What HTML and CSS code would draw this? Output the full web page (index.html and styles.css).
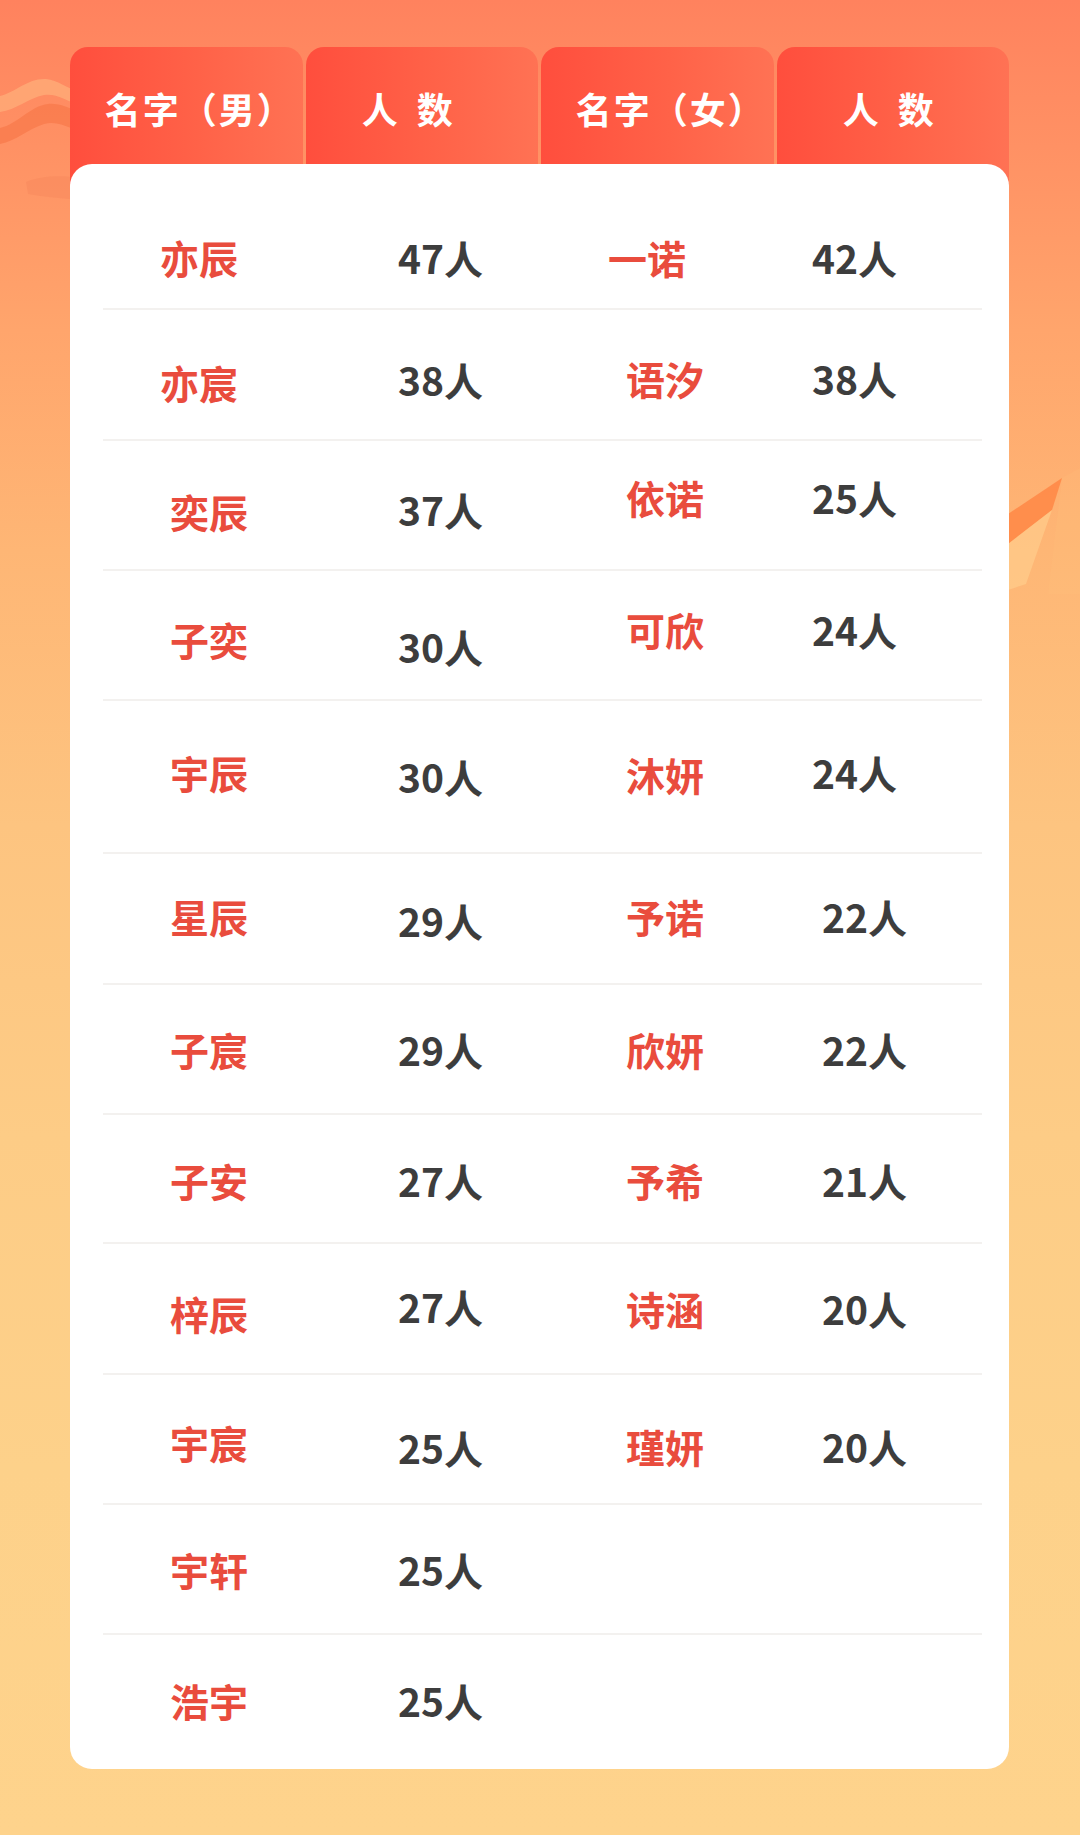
FILE: index.html
```html
<!DOCTYPE html>
<html lang="zh-CN">
<head>
<meta charset="utf-8">
<title>名字排行</title>
<link rel="stylesheet" href="styles.css">
</head>
<body>
<div class="page">
  <svg class="deco deco-left" width="80" height="220" viewBox="0 0 80 220" aria-hidden="true">
    <path d="M0,96 C16,92 28,78 46,79 C58,80 66,88 80,92 L80,106 C66,100 56,93 44,95 C28,98 16,110 0,112 Z" fill="#ffab78" opacity="0.8"/>
    <path d="M0,128 C18,124 30,106 48,104 C60,103 68,108 80,112 L80,132 C66,126 56,121 44,124 C28,129 16,141 0,144 Z" fill="#f87a4b" opacity="0.75"/>
    <path d="M26,182 C40,176 60,175 80,178 L80,200 C62,198 44,197 28,194 Z" fill="#f6845a" opacity="0.4"/>
  </svg>
  <svg class="deco deco-right" width="80" height="200" viewBox="0 0 80 200" aria-hidden="true">
    <path d="M0,120 L54,84 L44,116 L0,150 Z" fill="#ff8a48" opacity="0.9"/>
    <path d="M0,150 L44,116 L18,190 L0,196 Z" fill="#ffd08f" opacity="0.6"/>
    <path d="M54,84 L80,70 L80,200 L40,200 Z" fill="#ffc27e" opacity="0.2"/>
  </svg>

  <div class="board">
    <div class="tabs">
      <div class="tab tab-name">名字（男）</div>
      <div class="tab tab-count tab-c2">人 数</div>
      <div class="tab tab-name">名字（女）</div>
      <div class="tab tab-count tab-c4">人 数</div>
    </div>

    <div class="card">
      <div class="row r1">
        <span class="name nl">亦辰</span><span class="num">47人</span><span class="name nl2">一诺</span><span class="num">42人</span>
      </div>
      <div class="row r-131">
        <span class="name nl v8">亦宸</span><span class="num v5">38人</span><span class="name v4">语汐</span><span class="num v4">38人</span>
      </div>
      <div class="row r-130">
        <span class="name v6">奕辰</span><span class="num v4">37人</span><span class="name vm8">依诺</span><span class="num vm8">25人</span>
      </div>
      <div class="row r-130">
        <span class="name v4">子奕</span><span class="num v11">30人</span><span class="name vm6">可欣</span><span class="num vm6">24人</span>
      </div>
      <div class="row r-153">
        <span class="name vm4">宇辰</span><span class="num">30人</span><span class="name vm2">沐妍</span><span class="num vm4">24人</span>
      </div>
      <div class="row r-131">
        <span class="name vm2">星辰</span><span class="num v2">29人</span><span class="name vm2">予诺</span><span class="num nr vm2">22人</span>
      </div>
      <div class="row r-130">
        <span class="name">子宸</span><span class="num">29人</span><span class="name">欣妍</span><span class="num nr">22人</span>
      </div>
      <div class="row r-129">
        <span class="name v2">子安</span><span class="num v2">27人</span><span class="name v2">予希</span><span class="num nr v2">21人</span>
      </div>
      <div class="row r-131">
        <span class="name v5">梓辰</span><span class="num vm2">27人</span><span class="name">诗涵</span><span class="num nr">20人</span>
      </div>
      <div class="row r-130">
        <span class="name v3">宇宸</span><span class="num v8">25人</span><span class="name v7">瑾妍</span><span class="num nr v7">20人</span>
      </div>
      <div class="row r-130">
        <span class="name">宇轩</span><span class="num">25人</span><span class="name"></span><span class="num"></span>
      </div>
      <div class="row r-134 last">
        <span class="name vm2">浩宇</span><span class="num vm2">25人</span><span class="name"></span><span class="num"></span>
      </div>
    </div>
  </div>
</div>
</body>
</html>
```

FILE: styles.css
```css
* {
  box-sizing: border-box;
}

html, body {
  margin: 0;
  padding: 0;
}

body {
  width: 1080px;
  height: 1835px;
  overflow: hidden;
  font-family: "Noto Sans CJK SC", "Noto Sans", sans-serif;
  background: linear-gradient(180deg,
    #ff825e 0%,
    #ff9164 8%,
    #ffa56c 18%,
    #feb675 30%,
    #fdc480 45%,
    #fdcc86 62%,
    #fdd18a 80%,
    #fed38c 100%);
}

.page {
  position: relative;
  width: 1080px;
  height: 1835px;
  padding: 47px 0 0 70px;
}

.deco {
  position: absolute;
  display: block;
}

.deco-left {
  left: 0;
  top: 0;
}

.deco-right {
  left: 1008px;
  top: 394px;
}

.board {
  position: relative;
  width: 939px;
}

.tabs {
  display: grid;
  grid-template-columns: repeat(4, 1fr);
  column-gap: 3px;
  height: 137px;
}

.tab {
  border-radius: 18px 18px 0 0;
  background: linear-gradient(90deg, #ff4e3d 0%, #ff6248 55%, #ff7254 100%);
  color: #fff;
  font-size: 36px;
  font-weight: 700;
  line-height: 36px;
  text-align: center;
  padding-top: 43px;
  white-space: pre;
}

.tab-name {
  letter-spacing: 2px;
  padding-left: 27px;
}

.tab-count {
  word-spacing: 11px;
}

.tab-c2 {
  padding-right: 29px;
}

.tab-c4 {
  padding-right: 9px;
}

.card {
  position: relative;
  margin-top: -20px;
  height: 1605px;
  background: #fff;
  border-radius: 22px;
}

.row {
  display: grid;
  grid-template-columns: 228px 228px 186px 1fr;
  align-items: center;
  margin: 0 27px 0 33px;
  padding-left: 67px;
  border-bottom: 2px solid #f3f1ef;
}

.row.last {
  border-bottom: none;
}

.r1 { height: 146px; padding-top: 42px; }
.r-129 { height: 129px; }
.r-130 { height: 130px; }
.r-131 { height: 131px; }
.r-134 { height: 134px; }
.r-153 { height: 153px; }

.name,
.num {
  font-size: 39px;
  font-weight: 700;
  line-height: 39px;
  white-space: nowrap;
}

.name {
  color: #e94c3d;
}

.num {
  color: #3d3d3d;
}

.nl { margin-left: -10px; }
.nl2 { margin-left: -18px; }
.nr { margin-left: 10px; }

/* small vertical nudges: margin-top of 2n moves a centered cell down by n */
.v2 { margin-top: 4px; }
.v3 { margin-top: 6px; }
.v4 { margin-top: 8px; }
.v5 { margin-top: 10px; }
.v6 { margin-top: 12px; }
.v7 { margin-top: 14px; }
.v8 { margin-top: 16px; }
.v11 { margin-top: 22px; }
.vm2 { margin-bottom: 4px; }
.vm4 { margin-bottom: 8px; }
.vm6 { margin-bottom: 12px; }
.vm8 { margin-bottom: 16px; }
```
